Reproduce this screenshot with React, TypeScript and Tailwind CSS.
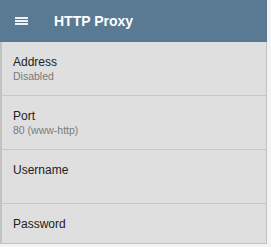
import React from 'react';

const rows = [
  { label: 'Address', value: 'Disabled' },
  { label: 'Port', value: '80 (www-http)' },
  { label: 'Username', value: '' },
  { label: 'Password', value: '' },
];

export default function App() {
  return (
    <div className="w-[271px] h-[247px] bg-[#f4f4f4] overflow-hidden" style={{ fontFamily: '"Liberation Sans", Arial, sans-serif' }}>
      <div className="w-[267px]">
        {/* Toolbar */}
        <div className="h-[42px] bg-[#5a7a94] flex items-center">
          <div className="ml-[15px] w-[13px] flex flex-col gap-[1.5px]">
            <span className="block h-[1.5px] bg-white/90" />
            <span className="block h-[1.5px] bg-white/90" />
            <span className="block h-[1.5px] bg-white/90" />
          </div>
          <span className="ml-[26px] text-white font-bold text-[14px] leading-none">HTTP Proxy</span>
        </div>

        {/* Settings list */}
        <div className="bg-[#dfdfdf] border-l-2 border-r border-b border-[#c2c2c2] h-[202px]">
          {rows.map((r, i) => (
            <div
              key={r.label}
              className={`h-[54px] pl-[11px] pt-[13px] ${i < rows.length - 1 ? 'border-b border-[#c6c6c6]' : ''}`}
            >
              <div className="text-[12px] leading-[14px] text-[#222]">{r.label}</div>
              {r.value && <div className="text-[10.5px] leading-[13px] mt-[1px] text-[#7a7a7a]">{r.value}</div>}
            </div>
          ))}
        </div>
      </div>
    </div>
  );
}
